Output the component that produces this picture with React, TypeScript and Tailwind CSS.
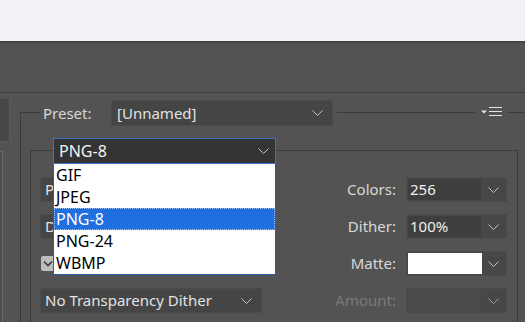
import React from "react";

const Chevron = ({ c = "#c4c4c4" }: { c?: string }) => (
  <svg width="11" height="6" viewBox="0 0 11 6">
    <polyline points="0.5,0.5 5.5,5.5 10.5,0.5" fill="none" stroke={c} strokeWidth="1" />
  </svg>
);

const DarkSelect = ({ text, w, className = "" }: { text: string; w: string; className?: string }) => (
  <div
    className={`h-[25px] ${w} flex items-center justify-between bg-[#454545] border border-[#4b4b4b] rounded-[2px] pl-[4px] pr-[9px] text-[#e2e2e2] ${className}`}
  >
    <span className="leading-none">{text}</span>
    <Chevron />
  </div>
);

const Field = ({ label, value, kind }: { label: string; value?: string; kind: "text" | "swatch" | "disabled" }) => (
  <div className="h-[25px] flex items-center justify-end gap-[10px]">
    <span className={`leading-none ${kind === "disabled" ? "text-[#7a7a7a]" : "text-[#d8d8d8]"}`}>{label}</span>
    <div className="w-[101px] h-[25px] border border-[#4c4c4c] rounded-[2px] flex p-[1px] bg-[#474747]">
      {kind === "text" && (
        <div className="w-[73px] h-full bg-[#3e3e3e] flex items-center pl-[2px] text-[#f0f0f0] leading-none">{value}</div>
      )}
      {kind === "swatch" && <div className="w-[74px] h-full bg-white" />}
      {kind === "disabled" && <div className="w-[73px] h-full bg-[#4b4b4b]" />}
      <div className="flex-1 flex items-center justify-center">
        <Chevron c={kind === "disabled" ? "#9a9a9a" : "#c4c4c4"} />
      </div>
    </div>
  </div>
);

export default function App() {
  const items = ["GIF", "JPEG", "PNG-8", "PNG-24", "WBMP"];
  return (
    <div
      className="w-[525px] h-[322px] overflow-hidden bg-[#535353] flex flex-col text-[15px]"
      style={{ fontFamily: '"Noto Sans", "Open Sans", sans-serif' }}
    >
      <div className="h-[41px] shrink-0 bg-[#f0f2f8]" />
      <div className="h-[2px] shrink-0 bg-[#444444]" />
      <div className="h-[50px] shrink-0 border-b border-[#3f3f3f]" />
      <div className="flex flex-1 min-h-0">
        {/* left strip */}
        <div className="w-[10px] shrink-0 flex flex-col pt-[6px]">
          <div className="h-[43px] bg-[#474747] border-r border-b border-[#5a5a5a]" />
          <div className="flex-1 mt-[9px] w-[3px] border-r border-t border-[#6a6a6a] bg-[#4e4e4e]" />
        </div>
        {/* outer group */}
        <div className="flex-1 ml-[10px] mt-[19px] border-l border-t border-[#3b3b3b] flex flex-col">
          <div className="-mt-[13px] h-[26px] flex items-center">
            <div className="ml-[19px] w-[71px] h-full bg-[#535353] flex items-center pl-[3px] text-[#d8d8d8] leading-none">
              Preset:
            </div>
            <div className="h-full bg-[#535353] pr-[4px]">
              <DarkSelect text="[Unnamed]" w="w-[222px] h-[26px]" className="pl-[5px] pr-[7px]" />
            </div>
            <div className="flex-1" />
            <div className="w-[33px] h-full bg-[#535353] flex items-center justify-center gap-[2px] mr-[17px]">
              <svg width="22" height="12" viewBox="0 0 22 12">
                <polygon points="0,3.5 6,3.5 3,6.5" fill="#e4e4e4" />
                <rect x="8" y="0" width="13" height="1" fill="#e4e4e4" />
                <rect x="8" y="4" width="13" height="1" fill="#e4e4e4" />
                <rect x="8" y="8" width="13" height="1" fill="#e4e4e4" />
              </svg>
            </div>
          </div>
          {/* inner group */}
          <div className="ml-[9px] mr-[7px] mt-[24px] flex-1 border-l border-t border-r border-[#3b3b3b] flex flex-col">
            <div className="-mt-[13px] ml-[22px] w-[223px] h-[26px] relative z-10">
              <div className="w-full h-full bg-[#343434] border border-[#3d6fc2] flex items-center justify-between pl-[5px] pr-[6px] text-[#f2f2f2] text-[16px] leading-none">
                <span>PNG-8</span>
                <Chevron />
              </div>
              <div className="absolute left-0 top-full w-full bg-white border border-[#2b5cab] border-t-0 flex flex-col text-black text-[16px]">
                {items.map((it) => (
                  <div
                    key={it}
                    className={`h-[22px] flex items-center pl-[2px] leading-none ${
                      it === "PNG-8" ? "bg-[#1f6fde] text-white outline-1 outline-dotted outline-[#9ec3f5] -outline-offset-1" : ""
                    }`}
                  >
                    {it}
                  </div>
                ))}
              </div>
            </div>
            <div className="flex mt-[13px]">
              <div className="pl-[9px] flex flex-col gap-[12px]">
                <DarkSelect text="Perceptual" w="w-[222px]" />
                <DarkSelect text="Diffusion" w="w-[222px]" />
                <div className="h-[25px] flex items-center pl-[1px]">
                  <div className="w-[14px] h-[15px] rounded-[2px] bg-[#bdbdbd] flex items-center justify-center">
                    <svg width="10" height="7" viewBox="0 0 10 7">
                      <polyline points="1,1.5 5,5.5 9,1.5" fill="none" stroke="#3a3a3a" strokeWidth="1.6" />
                    </svg>
                  </div>
                </div>
                <DarkSelect text="No Transparency Dither" w="w-[222px]" />
              </div>
              <div className="flex-1 pr-[10px] flex flex-col gap-[12px]">
                <Field label="Colors:" value="256" kind="text" />
                <Field label="Dither:" value="100%" kind="text" />
                <Field label="Matte:" kind="swatch" />
                <Field label="Amount:" kind="disabled" />
              </div>
            </div>
          </div>
        </div>
      </div>
    </div>
  );
}
